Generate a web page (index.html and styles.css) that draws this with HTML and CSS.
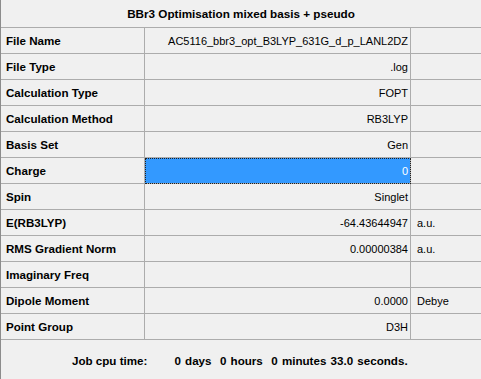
FILE: index.html
```html
<!DOCTYPE html>
<html lang="en">
  <head>
    <meta charset="UTF-8" />
    <title>Job Summary</title>
    <link rel="stylesheet" href="styles.css">
  </head>
  <body>
    <!-- Summary grid -->
    <div class="summary">
      <div class="title">BBr3 Optimisation mixed basis + pseudo</div>

      <div class="label">File Name</div>
      <div class="value">AC5116_bbr3_opt_B3LYP_631G_d_p_LANL2DZ</div>
      <div class="unit"></div>

      <div class="label">File Type</div>
      <div class="value">.log</div>
      <div class="unit"></div>

      <div class="label">Calculation Type</div>
      <div class="value">FOPT</div>
      <div class="unit"></div>

      <div class="label">Calculation Method</div>
      <div class="value">RB3LYP</div>
      <div class="unit"></div>

      <div class="label">Basis Set</div>
      <div class="value">Gen</div>
      <div class="unit"></div>

      <div class="label">Charge</div>
      <div class="value selected">0</div>
      <div class="unit"></div>

      <div class="label">Spin</div>
      <div class="value">Singlet</div>
      <div class="unit"></div>

      <div class="label">E(RB3LYP)</div>
      <div class="value">-64.43644947</div>
      <div class="unit">a.u.</div>

      <div class="label">RMS Gradient Norm</div>
      <div class="value">0.00000384</div>
      <div class="unit">a.u.</div>

      <div class="label">Imaginary Freq</div>
      <div class="value"></div>
      <div class="unit"></div>

      <div class="label">Dipole Moment</div>
      <div class="value">0.0000</div>
      <div class="unit">Debye</div>

      <div class="label">Point Group</div>
      <div class="value">D3H</div>
      <div class="unit"></div>
    </div>

    <!-- Timing footer -->
    <div class="cpu-time">
      <span class="cpu-label">Job cpu time:</span>
      <span class="cpu-value">0 days  0 hours  0 minutes 33.0 seconds.</span>
    </div>
  </body>
</html>
```
FILE: styles.css
```css
body {
  margin: 0;
  width: 481px;
  height: 379px;
  background-color: #f0f0f0;
  font-family: "Liberation Sans", Arial, sans-serif;
  font-size: 11px;
  color: #000000;
  box-sizing: border-box;
  border-left: 1px solid #8c8c8c;
  overflow: hidden;
}
.summary {
  display: grid;
  grid-template-columns: 144px 266px 1fr;
}
.summary > div {
  box-sizing: border-box;
  height: 26px;
  border-bottom: 1px solid #acacac;
  display: flex;
  align-items: center;
  white-space: nowrap;
}
.summary .title {
  grid-column: 1 / -1;
  height: 28px;
  justify-content: center;
  font-weight: bold;
  font-size: 11.7px;
}
.summary .label {
  padding-left: 5px;
  font-weight: bold;
  font-size: 11.6px;
  border-right: 1px solid #acacac;
}
.summary .value {
  justify-content: flex-end;
  padding-right: 2px;
  border-right: 1px solid #acacac;
}
.summary .value.selected {
  background-color: #3399ff;
  color: #ffffff;
  outline: 1px dotted #202020;
  outline-offset: -1px;
}
.summary .unit {
  padding-left: 6px;
}
.cpu-time {
  display: flex;
  align-items: center;
  height: 39px;
  padding-left: 71px;
  padding-top: 2px;
  box-sizing: border-box;
  font-weight: bold;
  font-size: 11.6px;
  white-space: pre;
}
.cpu-value {
  margin-left: 27px;
  word-spacing: 1px;
}
```
